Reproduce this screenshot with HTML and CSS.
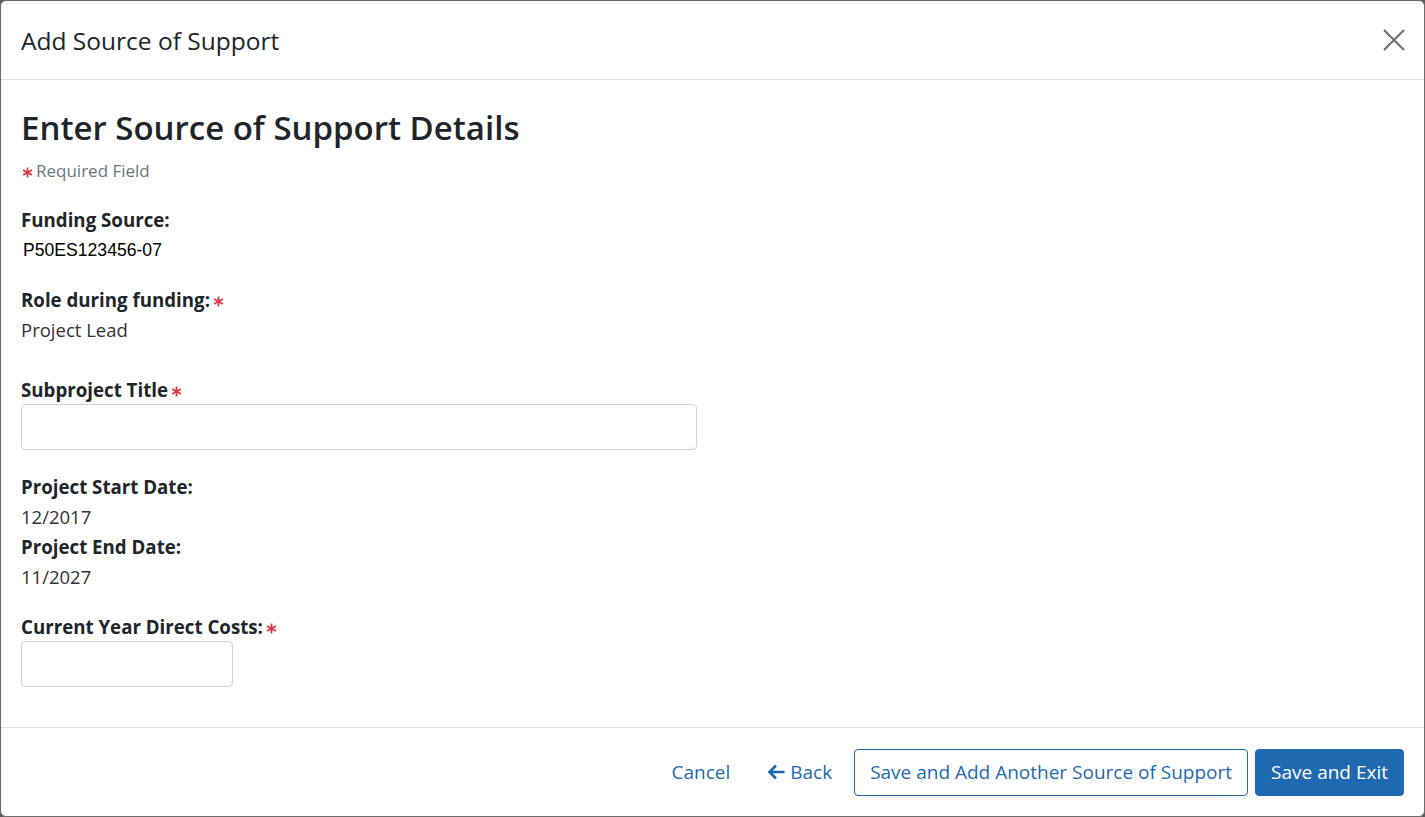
FILE: index.html
```html
<!DOCTYPE html>
<html lang="en">
<head>
<meta charset="utf-8">
<title>Add Source of Support</title>
<link rel="stylesheet" href="styles.css">
</head>
<body>
<div class="modal">
  <div class="modal-header">
    <h4 class="modal-title">Add Source of Support</h4>
    <button class="close" aria-label="Close">
      <svg width="22" height="22" viewBox="0 0 22 22"><path d="M1 1 L21 21 M21 1 L1 21" stroke="#6f6f6f" stroke-width="2.2" fill="none"/></svg>
    </button>
  </div>
  <div class="modal-body">
    <h2 class="page-title">Enter Source of Support Details</h2>
    <div class="required-note"><svg class="req" width="11" height="11" viewBox="0 0 12 12"><path d="M6 0.5 V11.5 M1.2 3.2 L10.8 8.8 M10.8 3.2 L1.2 8.8" stroke="#dc3545" stroke-width="1.9" fill="none"/></svg>Required Field</div>

    <div class="field first">
      <div class="label">Funding Source:</div>
      <div class="value mono">P50ES123456-07</div>
    </div>

    <div class="field gap20">
      <div class="label">Role during funding:<svg class="req" width="11" height="11" viewBox="0 0 12 12"><path d="M6 0.5 V11.5 M1.2 3.2 L10.8 8.8 M10.8 3.2 L1.2 8.8" stroke="#dc3545" stroke-width="1.9" fill="none"/></svg></div>
      <div class="value">Project Lead</div>
    </div>

    <div class="field gap33">
      <div class="label tight">Subproject Title<svg class="req" width="11" height="11" viewBox="0 0 12 12"><path d="M6 0.5 V11.5 M1.2 3.2 L10.8 8.8 M10.8 3.2 L1.2 8.8" stroke="#dc3545" stroke-width="1.9" fill="none"/></svg></div>
      <input class="input wide" type="text">
    </div>

    <div class="field gap22">
      <div class="label">Project Start Date:</div>
      <div class="value">12/2017</div>
      <div class="label">Project End Date:</div>
      <div class="value">11/2027</div>
    </div>

    <div class="field gap23">
      <div class="label tight">Current Year Direct Costs:<svg class="req" width="11" height="11" viewBox="0 0 12 12"><path d="M6 0.5 V11.5 M1.2 3.2 L10.8 8.8 M10.8 3.2 L1.2 8.8" stroke="#dc3545" stroke-width="1.9" fill="none"/></svg></div>
      <input class="input narrow" type="text">
    </div>
  </div>
  <div class="modal-footer">
    <a class="link-btn" href="#">Cancel</a>
    <a class="link-btn back" href="#">
      <svg width="19" height="18" viewBox="0 0 19 18"><path d="M9 2.5 L2.5 9 L9 15.5 M2.8 9 H17.5" stroke="currentColor" stroke-width="2.6" fill="none" stroke-linejoin="miter"/></svg>
      Back
    </a>
    <button class="btn outline">Save and Add Another Source of Support</button>
    <button class="btn primary">Save and Exit</button>
  </div>
</div>
</body>
</html>
```
FILE: styles.css
```css
* { box-sizing: border-box; }
html, body { margin: 0; height: 100%; }
body {
  background: #5a5a5a;
  font-family: "Open Sans", "Noto Sans", sans-serif;
  color: #212529;
}
.modal {
  width: 1425px;
  height: 817px;
  background: #fff;
  border: 1px solid #6b6b6b;
  border-radius: 6px;
  display: flex;
  flex-direction: column;
  overflow: hidden;
}
.modal-header {
  height: 79px;
  border-bottom: 1px solid #dee2e6;
  display: flex;
  align-items: center;
  justify-content: space-between;
  padding: 0 19px 0 20px;
}
.modal-title {
  margin: 0;
  font-size: 24.5px;
  font-weight: 400;
  line-height: 36px;
  padding-top: 2px;
}
.close {
  background: none;
  border: 0;
  padding: 0;
  width: 22px;
  height: 22px;
  cursor: pointer;
  display: flex;
}
.modal-body {
  flex: 1;
  padding: 29px 20px 0 20px;
}
.page-title {
  margin: 0;
  font-size: 33px;
  font-weight: 600;
  line-height: 38px;
}
.required-note {
  margin-top: 12px;
  font-size: 17px;
  line-height: 24px;
  color: #6c757d;
  display: flex;
  align-items: center;
}
.req {
  flex: none;
  margin: 3px 3px 0 1px;
}
.field { display: flex; flex-direction: column; align-items: flex-start; }
.field.first { margin-top: 22px; }
.gap20 { margin-top: 20px; }
.gap33 { margin-top: 33px; }
.gap22 { margin-top: 22px; }
.gap23 { margin-top: 23px; }
.label {
  font-size: 18.7px;
  font-weight: 700;
  line-height: 30px;
  display: flex;
  align-items: center;
}
.label.tight { line-height: 24px; margin-bottom: 2px; }
.label .req { margin: 3px 0 0 3px; }
.value {
  font-size: 18.5px;
  line-height: 30px;
  color: #333;
}
.value.mono {
  font-family: "Liberation Sans", Arial, sans-serif;
  font-size: 17.6px;
  color: #000;
  padding-left: 2px;
}
.input {
  height: 46px;
  border: 1px solid #ced4da;
  border-radius: 4px;
  background: #fff;
  font-size: 16px;
  padding: 6px 12px;
}
.input.wide { width: 676px; }
.input.narrow { width: 212px; }
.modal-footer {
  height: 89px;
  border-top: 1px solid #dee2e6;
  display: flex;
  align-items: center;
  justify-content: flex-end;
  padding: 0 20px 0 20px;
  gap: 7px;
}
.link-btn {
  color: #1f69b1;
  text-decoration: none;
  font-size: 19px;
  line-height: 47px;
  padding: 0 15px;
  display: flex;
  align-items: center;
  gap: 4px;
}
.btn {
  height: 47px;
  font-family: inherit;
  font-size: 19px;
  padding: 0 15px;
  border-radius: 4px;
  cursor: pointer;
}
.btn.outline {
  background: #fff;
  color: #1f69b1;
  border: 1px solid #1f69b1;
}
.btn.primary {
  background: #1f69b1;
  color: #fff;
  border: 1px solid #1f69b1;
}
```
